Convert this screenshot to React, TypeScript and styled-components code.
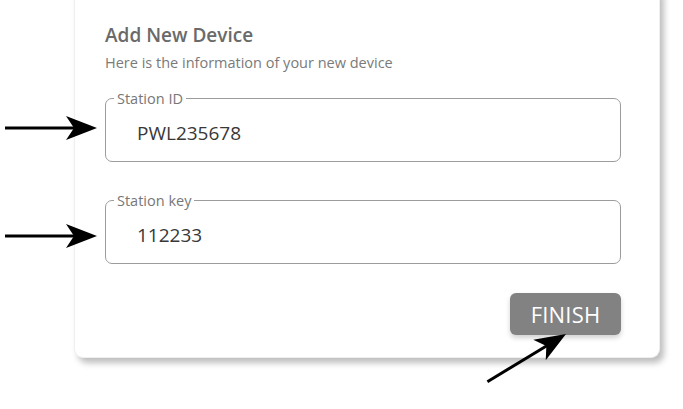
import React from "react";
import styled, { createGlobalStyle } from "styled-components";

const Global = createGlobalStyle`
  html, body { margin: 0; padding: 0; background: #ffffff; }
  body { font-family: "Open Sans", "Noto Sans", sans-serif; }
  #root { width: 683px; height: 409px; overflow: hidden; }
`;

const Page = styled.div`
  position: relative;
  width: 683px;
  height: 409px;
  display: flex;
  align-items: flex-start;
  padding-left: 74px;
  box-sizing: border-box;
`;

const Card = styled.div`
  margin-top: -10px;
  width: 586px;
  box-sizing: border-box;
  background: #fff;
  border: 1px solid #efefef;
  border-top: none;
  border-radius: 0 0 9px 9px;
  box-shadow: 4px 5px 6px rgba(0, 0, 0, 0.26);
  padding: 32px 38px 22px 30px;
  display: flex;
  flex-direction: column;
`;

const Title = styled.h1`
  margin: 0;
  font-size: 19px;
  line-height: 26px;
  font-weight: 600;
  color: #6a6a6a;
`;

const Subtitle = styled.p`
  margin: 5px 0 0;
  font-size: 14.5px;
  line-height: 19px;
  color: #7a7a7a;
`;

const Field = styled.fieldset<{ $gap: number }>`
  margin: ${(p) => p.$gap}px 0 0;
  padding: 0 0 15px 8px;
  border: 1px solid #9c9c9c;
  border-radius: 7px;
  min-width: 0;
`;

const Legend = styled.legend`
  padding: 0 3px;
  font-size: 14.5px;
  line-height: 17px;
  color: #777;
`;

const Value = styled.div`
  margin: 14px 0 0 23px;
  font-size: 19px;
  line-height: 25px;
  color: #383838;
`;

const Actions = styled.div`
  margin-top: 29px;
  display: flex;
  justify-content: flex-end;
`;

const Button = styled.button`
  width: 111px;
  height: 42px;
  border: none;
  border-radius: 6px;
  background: #828282;
  color: #fff;
  font-family: "Open Sans", "Noto Sans", sans-serif;
  font-size: 22px;
  letter-spacing: 0.2px;
  box-shadow: 0 3px 5px rgba(0, 0, 0, 0.18);
  cursor: pointer;
`;

const Overlay = styled.svg`
  position: absolute;
  left: 0;
  top: 0;
  pointer-events: none;
`;

const Arrow: React.FC<{ x: number; y: number; angle: number; len: number }> = ({ x, y, angle, len }) => (
  <g transform={`translate(${x},${y}) rotate(${angle})`}>
    <line x1={-len} y1={0} x2={-22} y2={0} stroke="#000" strokeWidth={3} />
    <polygon points="0,0 -31,-12 -23,0 -31,12" fill="#000" />
  </g>
);

export default function App() {
  return (
    <>
      <Global />
      <Page>
        <Card>
          <Title>Add New Device</Title>
          <Subtitle>Here is the information of your new device</Subtitle>
          <Field $gap={18}>
            <Legend>Station ID</Legend>
            <Value>PWL235678</Value>
          </Field>
          <Field $gap={30}>
            <Legend>Station key</Legend>
            <Value>112233</Value>
          </Field>
          <Actions>
            <Button>FINISH</Button>
          </Actions>
        </Card>
        <Overlay width={683} height={409} viewBox="0 0 683 409">
          <Arrow x={97} y={128} angle={0} len={92} />
          <Arrow x={97} y={236} angle={0} len={92} />
          <Arrow x={566} y={334} angle={-31.3} len={92} />
        </Overlay>
      </Page>
    </>
  );
}
